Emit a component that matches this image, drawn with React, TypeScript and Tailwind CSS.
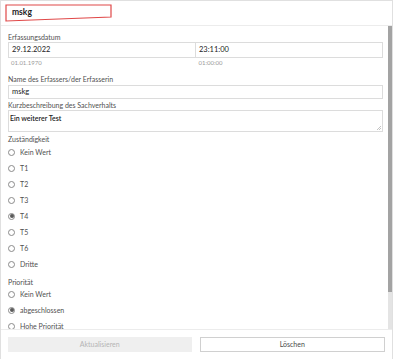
import React from "react";

const font = { fontFamily: 'Lato, "Open Sans", "Liberation Sans", sans-serif' };

type RadioProps = { label: string; checked?: boolean };

function Radio({ label, checked }: RadioProps) {
  return (
    <div className="flex items-center h-[16px] gap-[5px]">
      <span className="w-[7px] h-[7px] rounded-full border border-[#8a8a8a] bg-white flex items-center justify-center">
        {checked && <span className="w-[4px] h-[4px] rounded-full bg-[#5a5a5a]" />}
      </span>
      <span className="text-[7px] leading-none text-[#505050]">{label}</span>
    </div>
  );
}

export default function App() {
  const zust = ["Kein Wert", "T1", "T2", "T3", "T4", "T5", "T6", "Dritte"];
  const prio = ["Kein Wert", "abgeschlossen", "Hohe Priorität"];

  return (
    <div className="w-[400px] h-[359px] bg-white overflow-hidden" style={font}>
      <div className="w-[393px] h-[359px] flex flex-col border-l border-t border-r border-[#e0e0e0]">
        {/* header */}
        <div className="relative h-[25px] shrink-0 border-b border-[#ececec] flex items-center">
          <span className="ml-[11px] mt-[-2px] text-[8.5px] font-bold text-[#222]">mskg</span>
          <svg className="absolute left-0 top-0" width="120" height="25">
            <polygon points="5,4 110,4 110,16 5,20" fill="none" stroke="#e04848" strokeWidth="1.2" />
          </svg>
        </div>

        {/* body */}
        <div className="flex flex-1 min-h-0">
          <div className="flex-1 overflow-hidden pl-[7px] pr-[5px] pt-[6px] text-[#505050]">
            <div className="text-[7px] h-[10px] leading-[10px]">Erfassungsdatum</div>
            <div className="flex">
              <div className="flex-1 h-[16px] border border-[#dcdcdc] flex items-center pl-[3px] text-[7.5px] text-[#222]">29.12.2022</div>
              <div className="flex-1 h-[16px] border border-l-0 border-[#dcdcdc] flex items-center pl-[3px] text-[7.5px] text-[#222]">23:11:00</div>
            </div>
            <div className="flex mt-[1px] h-[8px] leading-[8px] text-[6px] text-[#9a9a9a]">
              <div className="flex-1 pl-[3px]">01.01.1970</div>
              <div className="flex-1 pl-[3px]">01:00:00</div>
            </div>

            <div className="text-[7px] h-[10px] leading-[10px] mt-[7px]">Name des Erfassers/der Erfasserin</div>
            <div className="h-[14px] mt-[1px] border border-[#dcdcdc] flex items-center pl-[3px] text-[7.5px] text-[#222]">mskg</div>

            <div className="text-[7px] h-[10px] leading-[10px] mt-[1px]">Kurzbeschreibung des Sachverhalts</div>
            <div className="relative h-[22px] border border-[#dcdcdc] pl-[1px] pt-[3px] text-[7px] leading-[9px] font-semibold text-[#222]">
              Ein weiterer Test
              <svg className="absolute right-[1px] bottom-[1px]" width="5" height="5">
                <path d="M1 5 L5 1 M3 5 L5 3" stroke="#aaa" strokeWidth="0.7" />
              </svg>
            </div>

            <div className="text-[7px] h-[9px] leading-[9px] mt-[3px]">Zuständigkeit</div>
            <div className="flex flex-col">
              {zust.map((z) => (
                <Radio key={z} label={z} checked={z === "T4"} />
              ))}
            </div>

            <div className="text-[7px] h-[8px] leading-[8px] mt-[6px]">Priorität</div>
            <div className="flex flex-col">
              {prio.map((p) => (
                <Radio key={p} label={p} checked={p === "abgeschlossen"} />
              ))}
            </div>
          </div>

          {/* scrollbar */}
          <div className="w-[4px] flex flex-col">
            <div className="h-[266px] bg-[#a3a3a3]" />
            <div className="flex-1 bg-[#e4e4e4]" />
          </div>
        </div>

        {/* footer */}
        <div className="h-[30px] shrink-0 border-t border-[#ececec] flex items-center gap-[8px] pl-[7px] pr-[7px]">
          <div className="flex-1 h-[15px] bg-[#efefef] flex items-center justify-center text-[7px] leading-none text-[#b5b5b5]">Aktualisieren</div>
          <div className="flex-1 h-[15px] border border-[#d0d0d0] flex items-center justify-center text-[7px] leading-none text-[#4a4a4a]">Löschen</div>
        </div>
      </div>
    </div>
  );
}
